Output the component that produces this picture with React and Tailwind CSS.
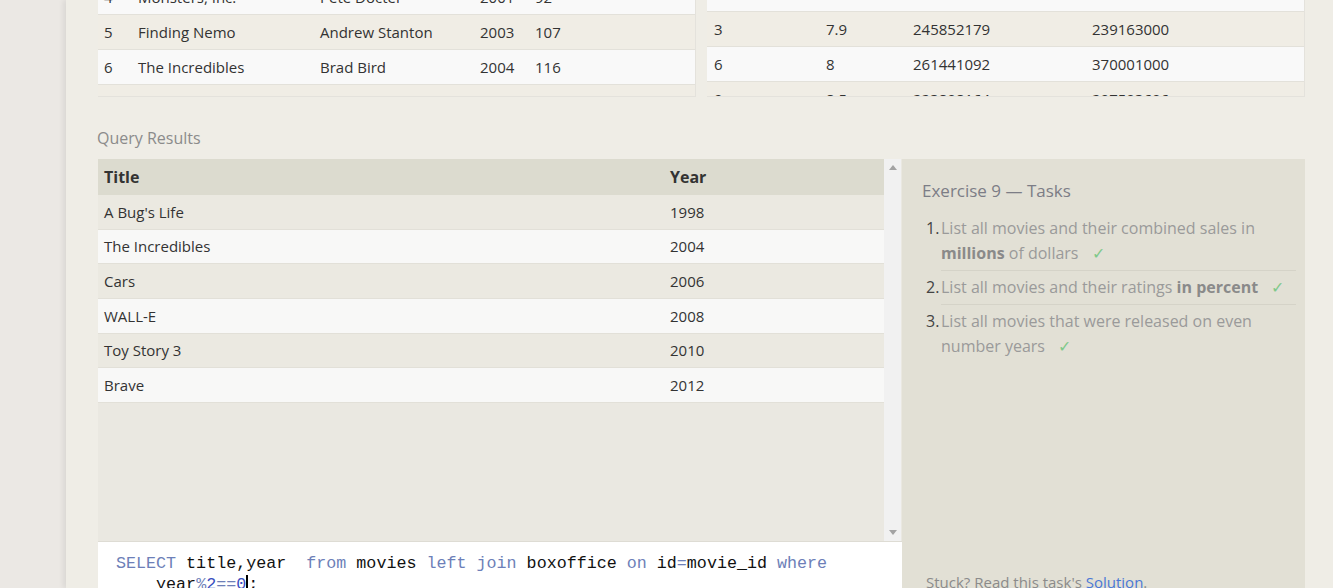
import React from "react";

const movies = [
  ["4", "Monsters, Inc.", "Pete Docter", "2001", "92"],
  ["5", "Finding Nemo", "Andrew Stanton", "2003", "107"],
  ["6", "The Incredibles", "Brad Bird", "2004", "116"],
  ["7", "Cars", "John Lasseter", "2006", "117"],
];
const box = [
  ["12", "6.4", "191452396", "368400000"],
  ["3", "7.9", "245852179", "239163000"],
  ["6", "8", "261441092", "370001000"],
  ["9", "8.5", "223808164", "297503696"],
];
const results = [
  ["A Bug's Life", "1998"],
  ["The Incredibles", "2004"],
  ["Cars", "2006"],
  ["WALL-E", "2008"],
  ["Toy Story 3", "2010"],
  ["Brave", "2012"],
];

const font = { fontFamily: '"Open Sans", "Noto Sans", sans-serif' };

function Check() {
  return <span className="ml-[13px] text-[#7fc98a]">✓</span>;
}

export default function App() {
  return (
    <div className="flex h-[588px] overflow-hidden bg-[#ebe8e4] text-[#333]" style={font}>
      <div className="w-[66px] shrink-0" />
      <div className="flex-1 bg-[#efede6] pl-[32px] pr-[28px] shadow-[-3px_0_5px_rgba(0,0,0,0.07)]">
        {/* top tables */}
        <div className="flex gap-[11px] h-[97px]">
          <div className="w-[598px] h-[97px] overflow-hidden border-r border-b border-[#e4e2dc]">
            <div className="-mt-[20px]">
              {movies.map((r, i) => (
                <div
                  key={i}
                  className={`flex h-[35px] items-center text-[15px] border-b border-[#e3e1da] ${i % 2 === 0 ? "bg-[#f9f9f9]" : "bg-[#f0ede5]"}`}
                >
                  <div className="w-[40px] pl-[6px]">{r[0]}</div>
                  <div className="w-[182px]">{r[1]}</div>
                  <div className="w-[160px]">{r[2]}</div>
                  <div className="w-[55px]">{r[3]}</div>
                  <div>{r[4]}</div>
                </div>
              ))}
            </div>
          </div>
          <div className="w-[598px] h-[97px] overflow-hidden border-r border-b border-[#e4e2dc]">
            <div className="-mt-[23px]">
              {box.map((r, i) => (
                <div
                  key={i}
                  className={`flex h-[35px] items-center text-[15px] border-b border-[#e3e1da] ${i % 2 === 0 ? "bg-[#f9f9f9]" : "bg-[#f0ede5]"}`}
                >
                  <div className="w-[119px] pl-[7px]">{r[0]}</div>
                  <div className="w-[87px]">{r[1]}</div>
                  <div className="w-[179px]">{r[2]}</div>
                  <div>{r[3]}</div>
                </div>
              ))}
            </div>
          </div>
        </div>

        <div className="h-[62px] flex items-end pb-[10px] text-[16px] leading-[22px] text-[#8b8b8b] -ml-[1px]">Query Results</div>

        <div className="flex">
          <div className="w-[804px] shrink-0 flex flex-col">
            <div className="flex h-[383px] bg-[#eae8e1] border-b border-[#dedcd4]">
              <div className="w-[786px]">
                <div className="flex h-[36px] items-center bg-[#dcdbcf] font-bold text-[16px] text-[#333]">
                  <div className="w-[572px] pl-[6px]">Title</div>
                  <div>Year</div>
                </div>
                {results.map((r, i) => (
                  <div
                    key={i}
                    className={`flex h-[34.7px] items-center text-[15px] border-b border-[#e2e0d8] ${i % 2 === 0 ? "bg-[#ebe9e1]" : "bg-[#f8f8f7]"}`}
                  >
                    <div className="w-[572px] pl-[6px]">{r[0]}</div>
                    <div>{r[1]}</div>
                  </div>
                ))}
              </div>
              <div className="w-[17px] bg-[#f1f1f1] flex flex-col items-center justify-between py-[6px]">
                <svg width="8" height="5" viewBox="0 0 8 5"><path d="M0 5 L4 0 L8 5 Z" fill="#a3a3a3" /></svg>
                <svg width="8" height="5" viewBox="0 0 8 5"><path d="M0 0 L4 5 L8 0 Z" fill="#a3a3a3" /></svg>
              </div>
            </div>
            <div
              className="bg-white flex-1 pl-[18px] pt-[11px] text-[16.7px] leading-[21px] text-[#111]"
              style={{ fontFamily: '"Liberation Mono", "DejaVu Sans Mono", monospace' }}
            >
              <div className="whitespace-pre">
                <span className="text-[#6d7fb8]">SELECT</span> title,year  <span className="text-[#6d7fb8]">from</span> movies <span className="text-[#6d7fb8]">left</span> <span className="text-[#6d7fb8]">join</span> boxoffice <span className="text-[#6d7fb8]">on</span> id<span className="text-[#6d7fb8]">=</span>movie_id <span className="text-[#6d7fb8]">where</span>
              </div>
              <div className="whitespace-pre">
                {"    "}year<span className="text-[#6d7fb8]">%</span><span className="text-[#3a4ec0]">2</span><span className="text-[#6d7fb8]">==</span><span className="text-[#3a4ec0]">0</span><span className="border-l-2 border-black">;</span>
              </div>
            </div>
          </div>

          <div className="w-[403px] shrink-0 bg-[#e2e0d5] pl-[20px] pr-[9px] pt-[19px] flex flex-col h-[440px]">
            <div className="text-[17px] text-[#7c7d86] leading-[25px]">Exercise 9 — Tasks</div>
            <ol className="mt-[13px] text-[16px] text-[#9a9a9a] leading-[25px]">
              <li className="flex">
                <span className="w-[19px] pl-[4px] text-[#444] shrink-0">1.</span>
                <div className="flex-1 pb-[4px] border-b border-[#d5d3c8]">
                  List all movies and their combined sales in <b className="text-[#8a8a8a]">millions</b> of dollars<Check />
                </div>
              </li>
              <li className="flex">
                <span className="w-[19px] pl-[4px] text-[#444] shrink-0 pt-[4px]">2.</span>
                <div className="flex-1 py-[4px] border-b border-[#d5d3c8]">
                  List all movies and their ratings <b className="text-[#8a8a8a]">in percent</b><Check />
                </div>
              </li>
              <li className="flex">
                <span className="w-[19px] pl-[4px] text-[#444] shrink-0 pt-[4px]">3.</span>
                <div className="flex-1 py-[4px]">
                  List all movies that were released on even number years<Check />
                </div>
              </li>
            </ol>
            <div className="mt-auto mb-[6px] pl-[4px] text-[15px] text-[#8b8b8b]">
              Stuck? Read this task's <span className="text-[#4a78d6]">Solution</span>.
            </div>
          </div>
        </div>
      </div>
    </div>
  );
}
